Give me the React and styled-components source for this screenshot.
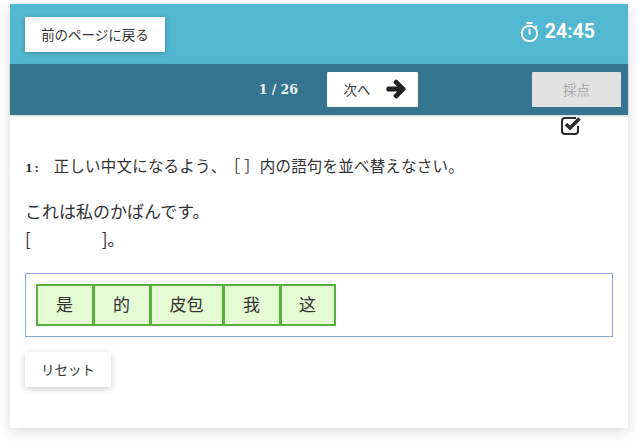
import styled, { createGlobalStyle } from "styled-components";
import { FaArrowRight } from "react-icons/fa";
import { MdOutlineTimer } from "react-icons/md";

const GlobalStyle = createGlobalStyle`
  html, body {
    margin: 0;
    padding: 0;
    background: #fff;
  }
  body {
    font-family: "Noto Sans CJK JP", "Noto Sans", sans-serif;
    color: #333;
  }
`;

const Page = styled.div`
  width: 638px;
  height: 444px;
  box-sizing: border-box;
  padding: 4px 10px 16px;
  overflow: hidden;
`;

const Card = styled.div`
  height: 424px;
  background: #fff;
  box-shadow: 0 3px 12px rgba(0, 0, 0, 0.16);
`;

const TopBar = styled.div`
  height: 60px;
  box-sizing: border-box;
  padding: 13px 33px 0 15px;
  background: #52b7d1;
  display: flex;
  justify-content: space-between;
  align-items: flex-start;
`;

const Button = styled.button`
  height: 35px;
  padding: 0 0 2px;
  border: 0;
  border-radius: 1px;
  background: ${(p) => (p.$disabled ? "#e2e2e2" : "#fff")};
  color: ${(p) => (p.$disabled ? "#a8a8a8" : "#333")};
  font-family: "Noto Sans CJK JP", sans-serif;
  font-size: 13.5px;
  width: ${(p) => p.$width}px;
  box-shadow: ${(p) => (p.$raised ? "0 1px 5px rgba(0, 0, 0, 0.22)" : "none")};
  display: flex;
  align-items: center;
  justify-content: center;
`;

const NextButton = styled(Button)`
  padding-left: 4px;
`;

const Timer = styled.div`
  display: flex;
  align-items: center;
  gap: 4px;
  margin-top: 2px;
  color: #fff;
  font-family: Roboto, sans-serif;
  font-weight: 700;
  font-size: 19.5px;
  line-height: 26px;
`;

const NavBar = styled.div`
  height: 51px;
  box-sizing: border-box;
  padding: 8px 7px 0 0;
  background: #34758f;
  box-shadow: 0 1px 2px rgba(0, 0, 0, 0.2);
  display: flex;
  align-items: flex-start;
`;

const Counter = styled.div`
  width: 317px;
  box-sizing: border-box;
  padding-right: 29px;
  text-align: right;
  color: #fff;
  font-family: "DejaVu Serif", serif;
  font-weight: 700;
  font-size: 12.5px;
  line-height: 35px;
  opacity: 0.92;
`;

const NextLabel = styled.span`
  margin-right: 15px;
`;

const NextArrow = styled(FaArrowRight)`
  color: #222;
  stroke: #222;
  stroke-width: 45px;
`;

const Spacer = styled.div`
  flex: 1;
`;

const CheckRow = styled.div`
  height: 20px;
  padding: 1px 46px 0 0;
  display: flex;
  justify-content: flex-end;
  line-height: 0;
`;

const Body = styled.div`
  padding: 0 15px;
`;

const Question = styled.p`
  margin: 17px 0 0;
  height: 24px;
  font-size: 15.5px;
  letter-spacing: 0.2px;
  line-height: 24px;
  color: #333;
  white-space: pre;
`;

const Num = styled.span`
  font-family: "DejaVu Serif", serif;
  font-weight: 700;
  font-size: 11px;
  letter-spacing: 2px;
  margin-right: 13px;
`;

const Blank = styled.span`
  margin-left: 6px;
`;

const Sentence = styled.div`
  margin-top: 20px;
  font-size: 17px;
  line-height: 27px;
  color: #333;
`;

const Answer = styled.div`
  font-size: 17px;
  line-height: 30px;
  white-space: pre;
`;

const Gap = styled.span`
  display: inline-block;
  width: 71px;
`;

const Tray = styled.div`
  margin-top: 19px;
  height: 64px;
  box-sizing: border-box;
  padding: 10px 10px 10px 9.5px;
  border: 1px solid #8fa6d6;
  display: flex;
  align-items: flex-start;
`;

const Tile = styled.div`
  width: ${(p) => p.$width}px;
  height: 42px;
  box-sizing: border-box;
  padding-bottom: 4px;
  border: 2px solid #57b13c;
  margin-right: -1px;
  background: #e4fbd4;
  display: flex;
  align-items: center;
  justify-content: center;
  font-family: "Liberation Serif", "Noto Sans CJK SC", serif;
  font-size: 17px;
  color: #333;
`;

const Reset = styled(Button)`
  margin-top: 15px;
  box-shadow: 0 2px 6px rgba(0, 0, 0, 0.2);
`;

const tiles = [
  { text: "是", width: 58 },
  { text: "的", width: 58 },
  { text: "皮包", width: 74 },
  { text: "我", width: 58 },
  { text: "这", width: 56 },
];

function CheckedBox() {
  return (
    <svg width="22" height="20" viewBox="0 0 22 20" fill="none">
      <path
        d="M16 2H5A3 3 0 0 0 2 5v10a3 3 0 0 0 3 3h10a3 3 0 0 0 3-3v-5"
        stroke="#2b2b2b"
        strokeWidth="2"
      />
      <path d="M6 8l4 4 9.5-9.5" stroke="#2b2b2b" strokeWidth="3.6" />
    </svg>
  );
}

export default function App() {
  return (
    <Page>
      <GlobalStyle />
      <Card>
        <TopBar>
          <Button $width={140} $raised>前のページに戻る</Button>
          <Timer>
            <MdOutlineTimer size={23} />
            24:45
          </Timer>
        </TopBar>
        <NavBar>
          <Counter>1 / 26</Counter>
          <NextButton $width={91}>
            <NextLabel>次へ</NextLabel>
            <NextArrow size={20} />
          </NextButton>
          <Spacer />
          <Button $width={89} $disabled>採点</Button>
        </NavBar>
        <CheckRow>
          <CheckedBox />
        </CheckRow>
        <Body>
          <Question>
            <Num>1:</Num>正しい中文になるよう、<Blank>［ ］</Blank>内の語句を並べ替えなさい。
          </Question>
          <Sentence>これは私のかばんです。</Sentence>
          <Answer>[<Gap />]。</Answer>
          <Tray>
            {tiles.map((t) => (
              <Tile key={t.text} $width={t.width}>{t.text}</Tile>
            ))}
          </Tray>
          <Reset $width={86}>リセット</Reset>
        </Body>
      </Card>
    </Page>
  );
}
